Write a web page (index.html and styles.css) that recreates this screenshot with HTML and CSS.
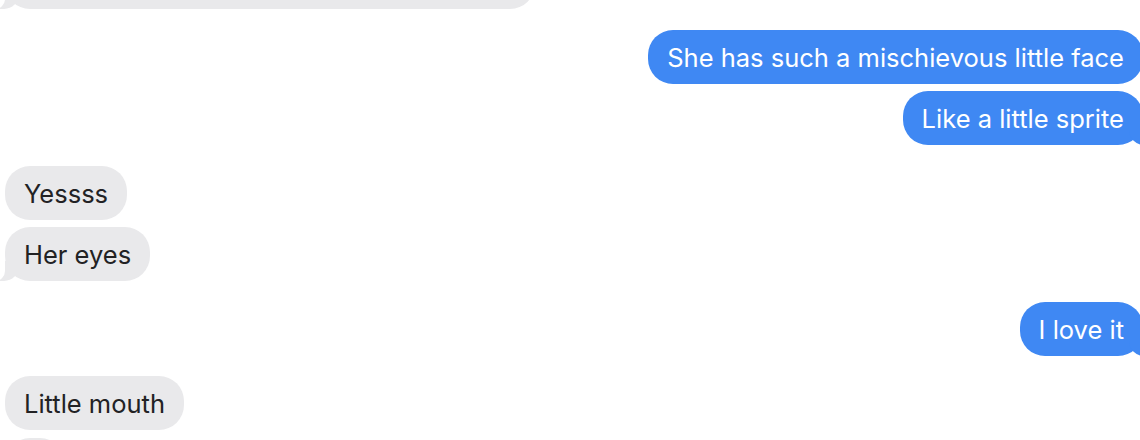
FILE: index.html
```html
<!DOCTYPE html>
<html lang="en">
<head>
<meta charset="utf-8">
<title>Messages</title>
<link rel="stylesheet" href="styles.css">
</head>
<body>
<div class="thread">
  <div class="group them">
    <div class="bubble them-bubble tail top-bubble">&nbsp;</div>
  </div>
  <div class="group me">
    <div class="bubble me-bubble">She has such a mischievous little face</div>
    <div class="bubble me-bubble tail">Like a little sprite</div>
  </div>
  <div class="group them">
    <div class="bubble them-bubble">Yessss</div>
    <div class="bubble them-bubble tail">Her eyes</div>
  </div>
  <div class="group me">
    <div class="bubble me-bubble tail">I love it</div>
  </div>
  <div class="group them">
    <div class="bubble them-bubble">Little mouth</div>
    <div class="bubble them-bubble">&nbsp;&nbsp;&nbsp;</div>
  </div>
</div>
</body>
</html>
```

FILE: styles.css
```css
html, body {
  margin: 0;
  padding: 0;
  background: #ffffff;
  overflow: hidden;
  height: 440px;
}

body {
  font-family: Inter, "Noto Sans", "Liberation Sans", sans-serif;
  font-size: 25.5px;
  -webkit-font-smoothing: antialiased;
}

.thread {
  display: flex;
  flex-direction: column;
  gap: 20.5px;
  margin: -45px -3px 0 5px;
}

.group {
  display: flex;
  flex-direction: column;
  gap: 7.5px;
}

.group.them {
  align-items: flex-start;
}

.group.me {
  align-items: flex-end;
}

.bubble {
  position: relative;
  height: 54px;
  box-sizing: border-box;
  padding: 2px 19px 0;
  display: flex;
  align-items: center;
  border-radius: 25px;
  line-height: 30px;
  white-space: nowrap;
}

.top-bubble {
  width: 530px;
}

.them-bubble {
  background: #e9e9eb;
  color: #222224;
}

.me-bubble {
  background: #3f88f3;
  color: #ffffff;
}

.them-bubble.tail::before {
  content: "";
  position: absolute;
  bottom: 0;
  left: -6px;
  width: 20px;
  height: 20px;
  background: #e9e9eb;
  border-bottom-right-radius: 15px;
}

.them-bubble.tail::after {
  content: "";
  position: absolute;
  bottom: 0;
  left: -26px;
  width: 26px;
  height: 20px;
  background: #ffffff;
  border-bottom-right-radius: 10px;
}

.me-bubble.tail::before {
  content: "";
  position: absolute;
  bottom: 0;
  right: -6px;
  width: 20px;
  height: 20px;
  background: #3f88f3;
  border-bottom-left-radius: 15px;
}

.me-bubble.tail::after {
  content: "";
  position: absolute;
  bottom: 0;
  right: -26px;
  width: 26px;
  height: 20px;
  background: #ffffff;
  border-bottom-left-radius: 10px;
}
```
